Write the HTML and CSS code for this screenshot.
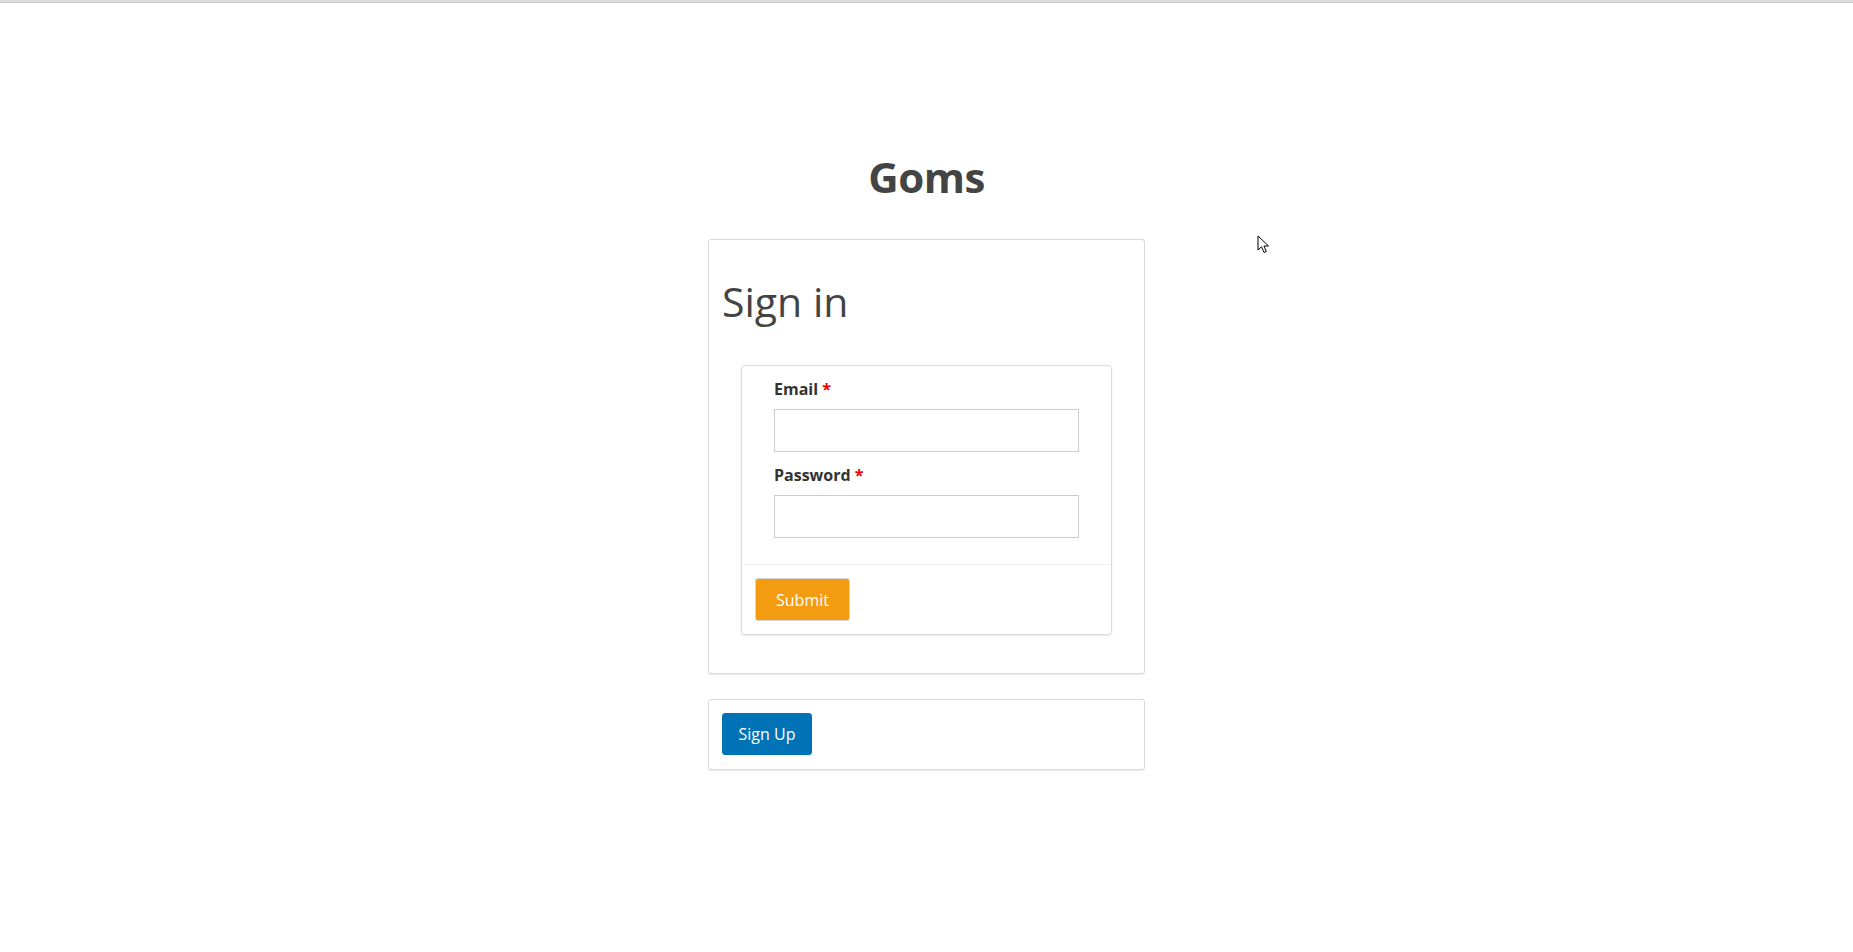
FILE: index.html
```html
<!DOCTYPE html>
<html>
<head>
<meta charset="utf-8">
<link rel="stylesheet" href="styles.css">
</head>
<body>
<div class="topbar"></div>
<main class="page">
  <h1 class="brand">Goms</h1>
  <section class="card signin-card">
    <h2 class="signin-title">Sign in</h2>
    <form class="form-box">
      <div class="form-body">
        <label class="field-label">Email <span class="req">*</span></label>
        <input class="field-input" type="email">
        <label class="field-label">Password <span class="req">*</span></label>
        <input class="field-input" type="password">
      </div>
      <div class="form-footer">
        <button type="button" class="btn btn-submit">Submit</button>
      </div>
    </form>
  </section>
  <section class="card signup-card">
    <button type="button" class="btn btn-signup">Sign Up</button>
  </section>
</main>
<svg class="cursor" width="14" height="20" viewBox="0 0 14 20">
  <path d="M1 1 L1 15 L4.5 11.8 L7 17.5 L9.3 16.5 L6.9 11 L11.5 11 Z" fill="#fff" stroke="#000" stroke-width="1" stroke-linejoin="miter"/>
</svg>
</body>
</html>
```
FILE: styles.css
```css
* { box-sizing: border-box; }
html, body { margin: 0; padding: 0; background: #fff; }
body {
  font-family: "Open Sans", "Noto Sans", sans-serif;
  color: #333;
  min-height: 952px;
  position: relative;
}
.topbar {
  height: 3px;
  background: #dcdcdc;
  border-bottom: 1px solid #c8c8c8;
}
.page {
  display: flex;
  flex-direction: column;
  align-items: center;
  padding-top: 146px;
}
.brand {
  margin: 0;
  font-size: 42px;
  line-height: 56px;
  font-weight: 700;
  color: #444;
  letter-spacing: -0.5px;
}
.card {
  width: 437px;
  background: #fff;
  border: 1px solid #d9d9d9;
  border-radius: 3px;
  box-shadow: 0 1px 1px rgba(0,0,0,0.08);
}
.signin-card {
  margin-top: 34px;
  padding: 39px 32px 38px 32px;
}
.signin-title {
  margin: 0 0 42px -19px;
  font-size: 41px;
  line-height: 44px;
  font-weight: 400;
  color: #444;
}
.form-box {
  border: 1px solid #dcdcdc;
  border-radius: 4px;
  box-shadow: 0 1px 2px rgba(0,0,0,0.1);
}
.form-body {
  display: flex;
  flex-direction: column;
  padding: 12px 32px 26px 32px;
}
.field-label {
  font-size: 16px;
  font-weight: 700;
  line-height: 22px;
  color: #333;
  margin-bottom: 9px;
}
.req { color: #e00; }
.field-input {
  height: 43px;
  width: 100%;
  border: 1px solid #ccc;
  margin: 0 0 12px 0;
  font: inherit;
}
.field-input:last-child { margin-bottom: 0; }
.form-footer {
  border-top: 1px solid #f2f2f2;
  padding: 13px 13px 13px 13px;
}
.btn {
  font-family: inherit;
  font-size: 16px;
  color: #fff;
  border-radius: 3px;
  height: 43px;
  cursor: pointer;
}
.btn-submit {
  width: 95px;
  background: #f39c12;
  border: 1px solid #d4d4d4;
}
.signup-card {
  margin-top: 25px;
  padding: 13px 13px 14px 13px;
}
.btn-signup {
  width: 90px;
  height: 42px;
  background: #0073b7;
  border: 1px solid #0073b7;
}
.cursor {
  position: absolute;
  left: 1257px;
  top: 235px;
}
```
